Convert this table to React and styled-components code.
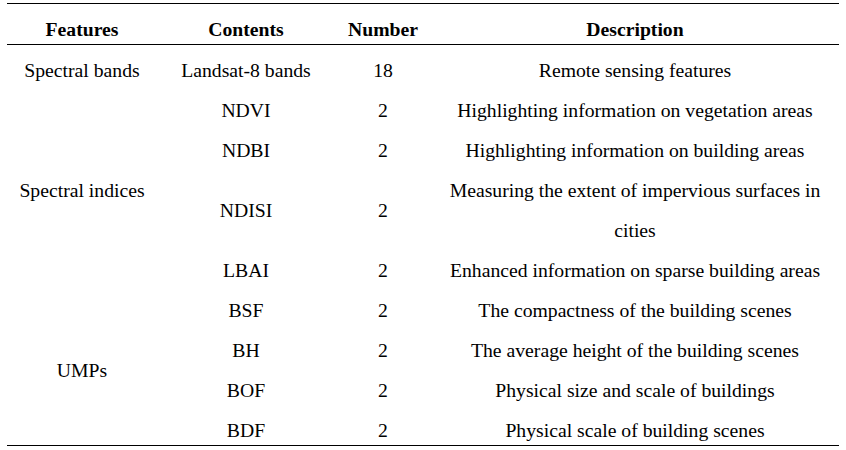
import React from "react";
import styled, { createGlobalStyle } from "styled-components";

const GlobalStyle = createGlobalStyle`
  html, body {
    margin: 0;
    padding: 0;
    background: #fff;
    color: #000;
  }
`;

const Page = styled.div`
  padding: 3px 7px 0 7px;
  width: 832px;
`;

const Table = styled.div`
  display: grid;
  grid-template-columns: 150px 178px 96px 408px;
  grid-template-rows: 40.5px repeat(10, 40px);
  border-top: 1.5px solid #000;
  border-bottom: 1.5px solid #000;
  font-family: "Liberation Serif", "Times New Roman", Times, serif;
  font-size: 19.7px;
  line-height: 40px;
`;

const Cell = styled.div`
  grid-row: span ${(p) => p.$span || 1};
  display: flex;
  align-items: center;
  justify-content: center;
  text-align: center;
  padding-top: 10px;
  box-sizing: border-box;
  white-space: nowrap;
  font-family: "Liberation Serif", "Times New Roman", Times, serif;
`;

const HeadCell = styled(Cell)`
  font-weight: bold;
  border-bottom: 1.5px solid #000;
`;

const rows = [
  { feature: "Spectral bands", span: 1, content: "Landsat-8 bands", number: "18", desc: ["Remote sensing features"] },
  { feature: "Spectral indices", span: 5, content: "NDVI", number: "2", desc: ["Highlighting information on vegetation areas"] },
  { content: "NDBI", number: "2", desc: ["Highlighting information on building areas"] },
  { content: "NDISI", number: "2", desc: ["Measuring the extent of impervious surfaces in", "cities"] },
  { content: "LBAI", number: "2", desc: ["Enhanced information on sparse building areas"] },
  { feature: "UMPs", span: 4, content: "BSF", number: "2", desc: ["The compactness of the building scenes"] },
  { content: "BH", number: "2", desc: ["The average height of the building scenes"] },
  { content: "BOF", number: "2", desc: ["Physical size and scale of buildings"] },
  { content: "BDF", number: "2", desc: ["Physical scale of building scenes"] },
];

export default function App() {
  return (
    <>
      <GlobalStyle />
      <Page>
        <Table>
          <HeadCell>Features</HeadCell>
          <HeadCell>Contents</HeadCell>
          <HeadCell>Number</HeadCell>
          <HeadCell>Description</HeadCell>
          {rows.map((row) => {
            const lines = row.desc.length;
            return (
              <React.Fragment key={row.content}>
                {row.feature && <Cell $span={row.span}>{row.feature}</Cell>}
                <Cell $span={lines}>{row.content}</Cell>
                <Cell $span={lines}>{row.number}</Cell>
                <Cell $span={lines}>
                  <div>
                    {row.desc.map((line, i) => (
                      <div key={i}>{line}</div>
                    ))}
                  </div>
                </Cell>
              </React.Fragment>
            );
          })}
        </Table>
      </Page>
    </>
  );
}
